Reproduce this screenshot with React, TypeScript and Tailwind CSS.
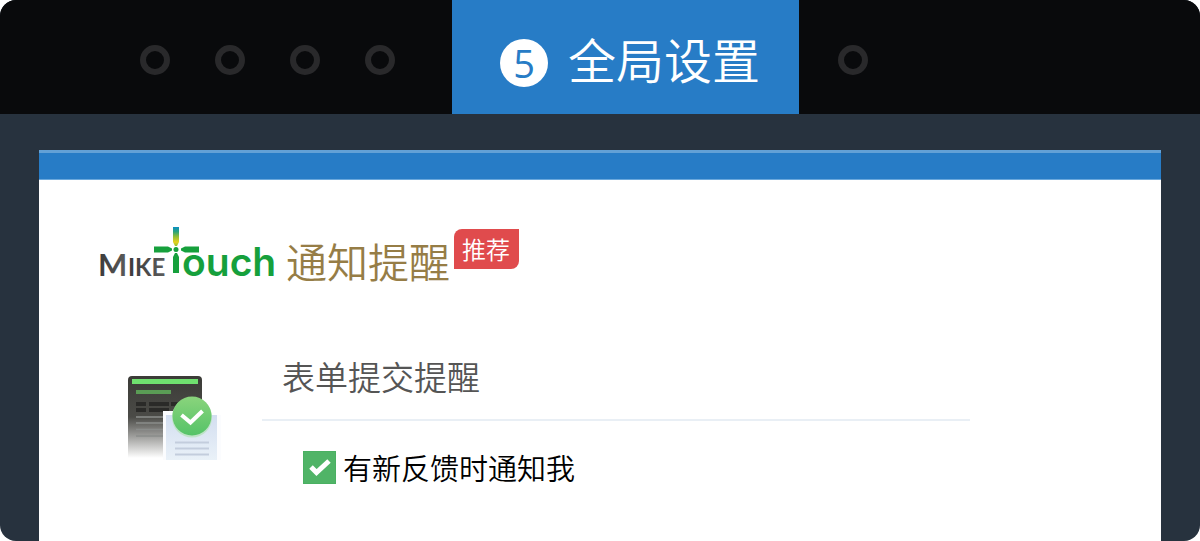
import { useState } from "react"

const stepsBefore = [1, 2, 3, 4]
const stepsAfter = [6]

function StepDot({ step }: { step: number }) {
  return (
    <button
      type="button"
      aria-label={`${step}`}
      className="size-[30px] shrink-0 rounded-full border-6 border-[#29292b]"
    />
  )
}

function StepBar() {
  return (
    <nav className="flex h-[114px] items-stretch bg-[#090a0c]">
      <div className="flex items-center gap-[45px] pt-[6px] pr-[57px] pl-[140px]">
        {stepsBefore.map((step) => (
          <StepDot key={step} step={step} />
        ))}
      </div>
      <button
        type="button"
        aria-current="step"
        className="flex items-start gap-5 bg-[#277cc6] pr-[39px] pl-12 text-white"
      >
        <span className="mt-[39px] flex size-12 items-center justify-center rounded-full bg-white font-['Open_Sans','Noto_Sans',sans-serif] text-[38px] leading-none font-normal text-[#277cc6]">
          5
        </span>
        <span className="mt-[34px] text-[48px] leading-none whitespace-nowrap">全局设置</span>
      </button>
      <div className="flex items-center gap-[45px] pt-[6px] pl-[39px]">
        {stepsAfter.map((step) => (
          <StepDot key={step} step={step} />
        ))}
      </div>
    </nav>
  )
}

function Logo() {
  return (
    <svg width="180" height="64" viewBox="0 0 180 64" role="img" aria-label="MikeTouch" className="shrink-0">
      <defs>
        <linearGradient id="stem" x1="0" y1="0" x2="0" y2="1">
          <stop offset="0" stopColor="#0b8fc4" />
          <stop offset="0.25" stopColor="#2ba37a" />
          <stop offset="0.5" stopColor="#8fbc36" />
          <stop offset="0.8" stopColor="#e8d21d" />
          <stop offset="1" stopColor="#8fc030" />
        </linearGradient>
        <linearGradient id="ink" x1="0" y1="0" x2="1" y2="0">
          <stop offset="0" stopColor="#3a3a3a" />
          <stop offset="1" stopColor="#5c5c5c" />
        </linearGradient>
      </defs>
      <g fill="url(#ink)" className="font-['Lato',sans-serif] font-bold">
        <text x="0" y="52" fontSize="31">M</text>
        <text x="30" y="52" fontSize="24">IKE</text>
      </g>
      <path d="M75 3h6v15l-2 4h-2l-2-4z" fill="url(#stem)" />
      <g fill="#16a03c">
        <path d="M56 22.500h14l4 2v2l-4 2H56z" />
        <path d="M101 22.500H87l-4 2v2l4 2h14z" />
        <path d="M75 49V33l2-4h2l2 4v16z" />
        <circle cx="78" cy="25.500" r="2.500" />
        <text x="84" y="52" fontSize="39" className="font-['Inter',sans-serif] font-semibold">
          ouch
        </text>
      </g>
    </svg>
  )
}

function FormIcon() {
  return (
    <svg width="96" height="86" viewBox="0 0 96 86" aria-hidden="true" className="shrink-0">
      <defs>
        <linearGradient id="board" x1="0" y1="0" x2="0" y2="1">
          <stop offset="0" stopColor="#3b3b37" />
          <stop offset="0.5" stopColor="#4b4b47" />
          <stop offset="0.75" stopColor="#a3a3a1" />
          <stop offset="1" stopColor="#ffffff" />
        </linearGradient>
        <linearGradient id="paper" x1="0" y1="0" x2="0" y2="1">
          <stop offset="0" stopColor="#d3def0" />
          <stop offset="1" stopColor="#e9f1f8" />
        </linearGradient>
        <linearGradient id="seal" x1="0" y1="0" x2="0" y2="1">
          <stop offset="0" stopColor="#8ad47c" />
          <stop offset="1" stopColor="#55c368" />
        </linearGradient>
      </defs>
      <path d="M0 84V6q0-4 4-4h66q4 0 4 4v78z" fill="url(#board)" />
      <rect x="4" y="5" width="66" height="5" fill="#6fe06f" />
      <rect x="8" y="16" width="35" height="4" fill="#5a9c55" />
      <g fill="#2a2a28">
        <rect x="8" y="28" width="10" height="4" />
        <rect x="21" y="28" width="20" height="4" />
        <rect x="43" y="28" width="10" height="4" />
        <rect x="8" y="34" width="10" height="4" />
        <rect x="21" y="34" width="20" height="4" />
      </g>
      <g stroke="#8a8d8b" strokeWidth="1.500">
        <path d="M8 43h30M8 49h28M8 55.500h28M8 62h28" />
      </g>
      <path d="M35 37h10v4h48v45H35z" fill="#fbfcfe" />
      <path d="M38 41h51v45H38z" fill="url(#paper)" />
      <path d="M47 68.500h34M47 74.500h34M47 80.500h34" stroke="#c3cddd" strokeWidth="2" />
      <circle cx="64" cy="43.500" r="20" fill="#bfe3c8" />
      <circle cx="64" cy="42" r="19.500" fill="url(#seal)" />
      <path d="M53.500 41l9 7.500L74.500 37" fill="none" stroke="#fff" strokeWidth="4" />
    </svg>
  )
}

function NotifyOption() {
  const [checked, setChecked] = useState(true)

  return (
    <label className="flex w-fit items-center gap-[7px]">
      <span className="grid size-[33px] place-items-center">
        <input
          type="checkbox"
          checked={checked}
          onChange={(e) => setChecked(e.target.checked)}
          className="col-start-1 row-start-1 size-full appearance-none border border-[#4ab062] checked:bg-[#50b467]"
        />
        {checked && (
          <svg width="22" height="18" viewBox="0 0 22 18" className="pointer-events-none col-start-1 row-start-1">
            <path d="M2 9l5.500 5.500L20 3" fill="none" stroke="#fff" strokeWidth="5" />
          </svg>
        )}
      </span>
      <span className="text-[29px] leading-9 text-black">有新反馈时通知我</span>
    </label>
  )
}

export default function App() {
  return (
    <div className="flex min-h-screen flex-col overflow-hidden rounded-[16px] bg-[#27323e] font-['Noto_Sans_CJK_SC_DemiLight','Noto_Sans_CJK_SC',sans-serif] font-[350]">
      <StepBar />
      <main className="mx-[39px] mt-9 flex-1 border-t-3 border-[#63a1d6] bg-white">
        <div className="h-[27px] border-b border-[#6aa8dc] bg-[#277cc6]" />

        <header className="flex pt-11 pl-[59px]">
          <Logo />
          <h1 className="ml-[8px] pt-[14px] text-[41px] leading-[44px] font-[350] text-[#967d46]">通知提醒</h1>
          <span className="mt-[5px] ml-1 h-10 rounded-tl-lg rounded-br-lg bg-[#e04b4d] pr-[9px] pl-2 text-[24px] leading-10 text-white">
            推荐
          </span>
        </header>

        <section className="flex pt-[70px] pl-[89px]">
          <div className="pt-4">
            <FormIcon />
          </div>
          <div className="ml-[38px] w-[708px]">
            <h2 className="border-b-2 border-[#e9eff5] pb-[25px] pl-5 text-[33px] leading-9 font-[350] text-[#555]">
              表单提交提醒
            </h2>
            <div className="pt-7 pl-[41px]">
              <NotifyOption />
            </div>
          </div>
        </section>
      </main>
    </div>
  )
}
